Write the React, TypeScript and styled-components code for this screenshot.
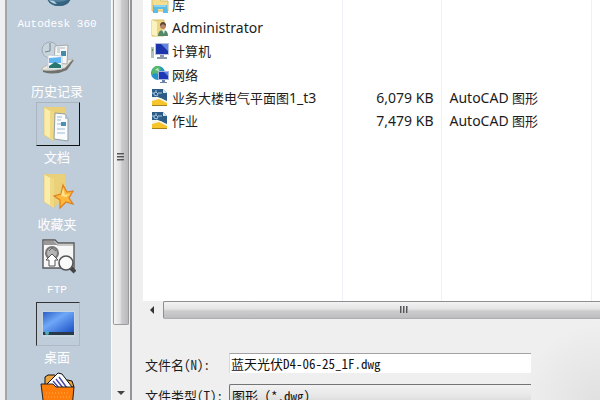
import React from 'react';
import styled, { createGlobalStyle } from 'styled-components';

const Global = createGlobalStyle`
  * { box-sizing: border-box; }
  body { margin: 0; background: #efefef; overflow: hidden; }
  button, input, select { font: inherit; }
`;

const ui = '"Noto Sans", "Noto Sans CJK SC", sans-serif';
const fixed = '"Noto Sans Mono CJK SC", "Liberation Mono", "Noto Sans CJK SC", monospace';

const Dialog = styled.main`
  display: flex;
  height: 100vh;
  overflow: hidden;
  background: #efefef;
  font-family: ${ui};
  font-size: 13px;
  color: #1c1c1c;
`;

const Places = styled.nav`
  display: flex;
  width: 127px;
  flex: none;
  margin-left: 5px;
  border-left: 2px solid #a3a5a9;
  border-right: 2px solid #94959a;
  background: #efefef;
`;

const PlaceList = styled.div`
  display: grid;
  grid-template-rows: repeat(7, 1fr);
  width: 104px;
  height: 466px;
  flex: none;
  margin-top: -31px;
  padding-right: 2px;
  background: #bfccda;
`;

const Place = styled.button`
  display: flex;
  flex-direction: column;
  align-items: center;
  min-height: 0;
  padding: 0;
  border: 0;
  background: none;
  color: #fff;
  font-family: ${fixed};
`;

const Frame = styled.span<{ $state?: 'raised' | 'sunken' }>`
  display: flex;
  align-items: center;
  justify-content: center;
  width: 44px;
  height: 44px;
  flex: none;
  border: 1px solid transparent;
  ${(p) => p.$state === 'raised' && 'border-color: #aab5c0 #111 #111 #aab5c0;'}
  ${(p) => p.$state === 'sunken' && 'border-color: #333 #b0bac5 #b0bac5 #333;'}
`;

const PlaceName = styled.span<{ $latin?: boolean }>`
  padding-right: 2px;
  line-height: 22px;
  white-space: nowrap;
  ${(p) => p.$latin && 'font-family: "Liberation Mono", monospace; font-size: 11px;'}
`;

const VScroll = styled.div`
  display: flex;
  flex: 1;
  flex-direction: column;
  align-items: center;
  justify-content: space-between;
  border-left: 1px solid #fafafa;
`;

const VThumb = styled.div`
  display: flex;
  flex-direction: column;
  align-items: center;
  justify-content: center;
  width: 16px;
  height: 325px;
  flex: none;
  padding-bottom: 10px;
  border: 1px solid #9a9a9c;
  border-top: 0;
  border-radius: 0 0 2px 2px;
  background: linear-gradient(90deg, #f4f4f4, #e0e0e2 45%, #cbcbce 55%, #b9b9bd);
`;

const ScrollButton = styled.button`
  display: flex;
  align-items: center;
  justify-content: center;
  padding: 0;
  border: 0;
  background: none;
`;

const Work = styled.section`
  display: flex;
  flex: 1;
  flex-direction: column;
  min-width: 0;
  padding-left: 11px;
`;

const Pane = styled.div`
  height: 301px;
  flex: none;
  overflow: hidden;
  background: #fff;
`;

const Files = styled.table`
  width: 100%;
  height: 308px;
  margin-top: -7px;
  border-collapse: collapse;
  table-layout: fixed;
`;

const Row = styled.tr`
  height: 23px;
  &:nth-child(3n) { height: 24px; }
`;

const Cell = styled.td<{ $end?: boolean }>`
  padding: 0 7px 0 8px;
  border-right: 1px solid #eef1f8;
  line-height: 20px;
  text-align: ${(p) => (p.$end ? 'right' : 'left')};
  white-space: nowrap;
  &:last-child { border-right: 0; }
`;

const FileName = styled.span`
  display: flex;
  align-items: center;
`;

const FileLabel = styled.span`
  padding-left: 3px;
`;

const Latin = styled.span`
  font-size: 14px;
`;

const HScroll = styled.div`
  display: flex;
  height: 18px;
  flex: none;
`;

const HThumb = styled.div`
  display: flex;
  flex: 1;
  align-items: center;
  justify-content: center;
  padding-left: 44px;
  border: 1px solid #8e8e90;
  border-right: 0;
  border-bottom-color: #aeaeb0;
  border-radius: 2px 0 0 2px;
  background: linear-gradient(#f3f3f3, #e3e3e3 45%, #cdcdcf 55%, #bdbdc0);
`;

const Form = styled.form`
  display: grid;
  flex: 1;
  grid-template-columns: 86px 1fr 69px;
  grid-auto-rows: 20px;
  row-gap: 11px;
  padding-top: 34px;
  font-family: ${fixed};
  background: radial-gradient(circle at 100% 100%, #e0e0e0, #efefef 80px);
`;

const Label = styled.label`
  grid-column: 1;
  padding: 2px 0 0 2px;
  line-height: 20px;
  white-space: nowrap;
`;

const NameInput = styled.input`
  grid-column: 2;
  min-width: 0;
  padding: 0 1px;
  border: 0;
  border-top: 1px solid #a2a2a4;
  border-left: 1px solid #d8d8da;
  border-radius: 0;
  outline: 0;
  background: #fff;
  color: #111;
`;

const TypeSelect = styled.select`
  grid-column: 2;
  min-width: 0;
  height: 22px;
  padding: 0 2px;
  appearance: none;
  border: 1px solid #747476;
  border-right: 0;
  border-radius: 2px 0 0 2px;
  background: linear-gradient(#f2f2f2, #e8e8e8 50%, #d4d4d4);
  color: #111;
`;

const Cloud = () => (
  <svg width="34" height="34" viewBox="0 0 34 34">
    <ellipse cx="18" cy="20" rx="13" ry="12" fill="#5482a1" />
    <path d="M6 24q11 8 24 0-2 8-12 8T6 24" fill="#34637f" />
    <path d="M8 26q3 4 8 4l-3-3z" fill="#b5d2e4" />
  </svg>
);

const History = () => (
  <svg width="36" height="34" viewBox="0 0 36 34">
    <path d="M3 29l7-6 24-4-7 10q-12 6-24 2z" fill="#70706c" />
    <path d="M2 27l9-5 22-4-8 9q-11 4-23 2z" fill="#e9e7df" stroke="#aaa69c" strokeWidth=".6" />
    <circle cx="10" cy="9" r="8" fill="#c9d5dc" stroke="#a1adb5" />
    <path d="M10 2v8l-5 1" fill="none" stroke="#72828d" />
    <path d="M15 5l13-1-1 19-13-1z" fill="#f5f6f5" stroke="#a5aaad" />
    <path d="M17 7h8M17 9h3M17 11h3" stroke="#a8bac5" />
    <path d="M21 10h5v5h-5z" fill="#4489a8" />
    <path d="M8 14l14 1v13H8z" fill="#fff" stroke="#c3ced5" />
    <path d="M9 17l12-1v6H9z" fill="#62b5f0" />
    <path d="M9 25l6-4 6 3v3H9z" fill="#28776e" />
  </svg>
);

const FolderBase = () => (
  <>
    <path d="M3 2h21v25l-11 8z" fill="#ead078" />
    <path d="M3 2l9 5 1 29-10-6z" fill="#faedac" stroke="#dbc16b" strokeWidth=".6" />
    <path d="M9 5l4 2v28l-4-2z" fill="#f0d985" />
  </>
);

const Documents = () => (
  <svg width="34" height="38" viewBox="0 0 34 38">
    <FolderBase />
    <path d="M14 8l10 1 3 5v22l-14-2z" fill="#f9fbfc" stroke="#929da4" />
    <path d="M16 12h5M16 15h4M16 19h5M16 24h8M16 28h8" stroke="#9db9d3" />
    <path d="M20 17h5v4h-5z" fill="#4c91b3" />
    <path d="M24 9v5h3z" fill="#b4c6d2" />
  </svg>
);

const Favorites = () => (
  <svg width="34" height="38" viewBox="0 0 34 38">
    <FolderBase />
    <path d="M22 13l4 7 6-1-4 7 4 6-7-2-6 6v-8l-6-4 7-2z" fill="#ffb73c" stroke="#dc801e" strokeWidth="1.2" />
    <path d="M22 16l2 7 5-1-4 3-5-1z" fill="#ffe48c" />
  </svg>
);

const Ftp = () => (
  <svg width="36" height="36" viewBox="0 0 36 36">
    <path d="M3 1h12l3 3h16v25H3z" fill="#f7f7f7" stroke="#595959" strokeWidth="1.4" />
    <path d="M4 2h10l4 4H4z" fill="#999" />
    <path d="M17 6h16" stroke="#999" />
    <circle cx="12" cy="14" r="6" fill="#b5b5b5" stroke="#777" strokeWidth="2" />
    <path d="M9 12l3-3 4 3" fill="none" stroke="#666" />
    <path d="M12 15l6 6h-3v6H9v-6H6z" fill="#fff" stroke="#555" />
    <path d="M30 28l5 5" stroke="#444" strokeWidth="4" />
    <circle cx="26" cy="24" r="7" fill="#fafafa" stroke="#555" strokeWidth="1.6" />
  </svg>
);

const Desktop = () => (
  <svg width="36" height="32" viewBox="0 0 36 32">
    <defs>
      <linearGradient id="desk" x2="1" y2="1">
        <stop stopColor="#2c5fc7" />
        <stop offset=".4" stopColor="#6fa8f8" />
        <stop offset="1" stopColor="#1a50c5" />
      </linearGradient>
    </defs>
    <path d="M2 3h33v26H2z" fill="#c9d6df" />
    <path d="M3 4h31v20H3z" fill="url(#desk)" />
    <path d="M3 24h31v3H3z" fill="#293947" />
    <circle cx="7" cy="25" r="2" fill="#4db1bd" />
  </svg>
);

const Buzzsaw = () => (
  <svg width="36" height="38" viewBox="0 0 36 38">
    <path d="M5 6l3-2h7l3 3 14 3 2 6H5z" fill="#eca43c" stroke="#111" />
    <path d="M7 13L18 2l4 1 10 13v8H7z" fill="#fff" stroke="#111" />
    <path d="M13 10l6 7M16 8l7 9M19 6l8 11" stroke="#4545a2" strokeWidth="1.4" />
    <path d="M1 13h12l3 3h18l-2 21H4z" fill="#ff7d0b" stroke="#222" />
    <path d="M6 22h24M5 26h26M6 30h24" stroke="#ffb052" strokeDasharray="1 2" />
  </svg>
);

const LibraryIcon = () => (
  <svg width="18" height="18" viewBox="0 0 18 18">
    <path d="M1 3h7l2 2h7v10H1z" fill="#f4df91" stroke="#d5bd68" />
    <path d="M2 9h14l1 8h-5v-4H7v4H2z" fill="#5cbce6" />
    <path d="M3 10h12" stroke="#bce7f8" />
  </svg>
);
const UserIcon = () => (
  <svg width="18" height="18" viewBox="0 0 18 18">
    <path d="M1 1h12v16H1z" fill="#ecd585" stroke="#d8be68" />
    <path d="M1 1l5 2v14l-5-1z" fill="#fbf2bc" />
    <path d="M7 17q0-6 5-6t5 6z" fill="#528767" />
    <path d="M11 11h3l-1 4z" fill="#eee" />
    <circle cx="12" cy="7" r="3" fill="#b88468" />
    <path d="M9 7q0-4 3-4t3 4l-3-2z" fill="#5b4635" />
  </svg>
);
const ComputerIcon = () => (
  <svg width="18" height="18" viewBox="0 0 18 18">
    <path d="M0 5h3v11H0z" fill="#b5beb9" />
    <path d="M1 7h1v2H1z" fill="#56945c" />
    <path d="M4 1h14v12H4z" fill="#b9c1dc" />
    <path d="M5 2h12v10H5z" fill="#1b34ac" />
    <path d="M10 2h7v7z" fill="#6286df" />
    <path d="M9 13h4v2h3v2H6v-2h3z" fill="#8a98a9" />
  </svg>
);
const NetworkIcon = () => (
  <svg width="18" height="18" viewBox="0 0 18 18">
    <circle cx="7" cy="7" r="7" fill="#2495c8" />
    <path d="M3 1q5-3 7 2L7 8 3 7 1 9q-1-4 2-8" fill="#58b968" />
    <path d="M4 4l3-2 1 3z" fill="#c8ecd9" />
    <path d="M7 5h11v9H7z" fill="#a9b7dc" />
    <path d="M8 6h9v7H8z" fill="#1b38b5" />
    <path d="M13 6h4v4z" fill="#5f85e2" />
    <path d="M11 14h3v2h2v1H9v-1h2z" fill="#6d82a6" />
  </svg>
);
const DrawingIcon = () => (
  <svg width="18" height="18" viewBox="0 0 18 18">
    <path d="M1 0h11l4 4v13H1z" fill="#2d5c86" />
    <path d="M12 0v4h4z" fill="#dce7ef" />
    <path d="M1 9h15v8H1z" fill="#f6c52c" />
    <path d="M10 9h6v4z" fill="#2d5c86" />
    <path d="M1 8h6l9 4v2L8 10l-7 2z" fill="#f5f7ee" />
    <path d="M3 4l2-1 2 2-1 2-3-1zM1 4h2M7 4h4M5 1v2" fill="none" stroke="#a5c9e4" />
    <path d="M1 16h15v1H1z" fill="#a8801d" />
  </svg>
);

const Grip = ({ vertical }: { vertical?: boolean }) => (
  <svg width="10" height="10" viewBox="0 0 10 10">
    <path d={vertical ? 'M1 1.5h7M1 4.5h7M1 7.5h7' : 'M1.5 1v7M4.5 1v7M7.5 1v7'} stroke="#57575a" />
    <path d={vertical ? 'M1 2.5h7M1 5.5h7M1 8.5h7' : 'M2.5 1v7M5.5 1v7M8.5 1v7'} stroke="#9c9c9e" />
  </svg>
);

const places = [
  { name: 'Autodesk 360', icon: <Cloud />, latin: true },
  { name: '历史记录', icon: <History /> },
  { name: '文档', icon: <Documents />, state: 'raised' as const },
  { name: '收藏夹', icon: <Favorites /> },
  { name: 'FTP', icon: <Ftp />, latin: true },
  { name: '桌面', icon: <Desktop />, state: 'sunken' as const },
  { name: '', icon: <Buzzsaw /> },
];

const drawingType = <><Latin>AutoCAD</Latin> 图形</>;

const files = [
  { id: 'library', name: '库', icon: <LibraryIcon /> },
  { id: 'user', name: <Latin>Administrator</Latin>, icon: <UserIcon /> },
  { id: 'computer', name: '计算机', icon: <ComputerIcon /> },
  { id: 'network', name: '网络', icon: <NetworkIcon /> },
  { id: 'plan', name: <>业务大楼电气平面图<Latin>1_t3</Latin></>, icon: <DrawingIcon />, size: '6,079 KB', type: drawingType },
  { id: 'homework', name: '作业', icon: <DrawingIcon />, size: '7,479 KB', type: drawingType },
];

export default function App() {
  return (
    <Dialog>
      <Global />
      <Places>
        <PlaceList>
          {places.map((p, i) => (
            <Place key={i} type="button">
              <Frame $state={p.state}>{p.icon}</Frame>
              <PlaceName $latin={p.latin}>{p.name}</PlaceName>
            </Place>
          ))}
        </PlaceList>
        <VScroll>
          <VThumb><Grip vertical /></VThumb>
          <ScrollButton type="button" aria-label="Scroll down">
            <svg width="16" height="16" viewBox="0 0 16 16"><path d="M4 7h8l-4 4z" fill="#444" /></svg>
          </ScrollButton>
        </VScroll>
      </Places>
      <Work>
        <Pane>
          <Files>
            <colgroup><col width="199" /><col width="99" /><col width="150" /><col /></colgroup>
            <tbody>
              {files.map((f) => (
                <Row key={f.id}>
                  <Cell><FileName>{f.icon}<FileLabel>{f.name}</FileLabel></FileName></Cell>
                  <Cell $end><Latin>{f.size}</Latin></Cell>
                  <Cell>{f.type}</Cell>
                  <Cell />
                </Row>
              ))}
              <tr><Cell /><Cell /><Cell /><Cell /></tr>
            </tbody>
          </Files>
        </Pane>
        <HScroll>
          <ScrollButton type="button" aria-label="Scroll left">
            <svg width="20" height="16" viewBox="0 0 20 16"><path d="M11 4v8L7 8z" fill="#333" /></svg>
          </ScrollButton>
          <HThumb><Grip /></HThumb>
        </HScroll>
        <Form>
          <Label htmlFor="name">文件名(N):</Label>
          <NameInput id="name" defaultValue="蓝天光伏D4-06-25_1F.dwg" />
          <Label htmlFor="type">文件类型(T):</Label>
          <TypeSelect id="type"><option>图形 (*.dwg)</option></TypeSelect>
        </Form>
      </Work>
    </Dialog>
  );
}
